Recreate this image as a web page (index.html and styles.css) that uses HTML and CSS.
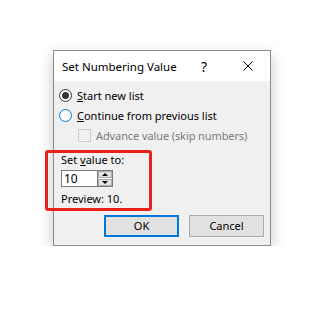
FILE: index.html
```html
<!DOCTYPE html>
<html lang="en">

<head>
    <meta charset="UTF-8">
    <title>Set Numbering Value</title>
    <link rel="stylesheet" href="styles.css">
</head>

<body>
    <div class="dialog">
        <div class="titlebar">
            <span class="title">Set Numbering Value</span>
            <span class="tb-btn help">?</span>
            <span class="tb-btn close">
                <svg width="10" height="10" viewBox="0 0 10 10">
                    <path d="M0.5 0.5 L9.5 9.5 M9.5 0.5 L0.5 9.5" stroke="#000" stroke-width="1" fill="none" />
                </svg>
            </span>
        </div>

        <div class="content">
            <div class="row">
                <span class="radio checked"></span>
                <span><u>S</u>tart new list</span>
            </div>
            <div class="row">
                <span class="radio focus"></span>
                <span><u>C</u>ontinue from previous list</span>
            </div>
            <div class="row sub disabled">
                <span class="checkbox"></span>
                <span>Advance value (skip numbers)</span>
            </div>

            <div class="group">
                <div class="label">Set <u>v</u>alue to:</div>
                <div class="spin">
                    <div class="spin-input">10</div>
                    <div class="spin-btns">
                        <span class="arrow up"></span>
                        <span class="arrow down"></span>
                    </div>
                </div>
                <div class="label">Preview: 10.</div>
            </div>

            <div class="buttons">
                <div class="btn default">OK</div>
                <div class="btn">Cancel</div>
            </div>
        </div>

        <div class="highlight"></div>
    </div>
</body>

</html>
```

FILE: styles.css
```css
body {
    margin: 0;
    padding: 50px 0 0 53px;
    background-color: #ffffff;
    font-family: "Noto Sans", sans-serif;
    font-size: 11px;
    color: #000000;
    white-space: nowrap;
}

.dialog {
    position: relative;
    width: 216px;
    border: 1px solid #8c8c8c;
    background-color: #f0f0f0;
    box-shadow: 0 5px 14px rgba(0, 0, 0, 0.22);
}

.titlebar {
    display: flex;
    align-items: center;
    height: 30px;
    background-color: #ffffff;
    font-size: 11.5px;
}

.title {
    flex: 1;
    padding-left: 8px;
}

.tb-btn {
    display: flex;
    align-items: center;
    justify-content: center;
    width: 44px;
    height: 30px;
}

.help {
    font-size: 14px;
}

.content {
    padding: 4px 6px 8px 5px;
}

.row {
    display: flex;
    align-items: center;
    height: 20px;
    gap: 5px;
}

.row.sub {
    padding-left: 19px;
    letter-spacing: -0.1px;
}

.disabled {
    color: #7a7a7a;
}

.radio {
    width: 11px;
    height: 11px;
    border: 1px solid #333333;
    border-radius: 50%;
    background-color: #ffffff;
    position: relative;
}

.radio.checked::after {
    content: "";
    position: absolute;
    left: 2px;
    top: 2px;
    width: 7px;
    height: 7px;
    border-radius: 50%;
    background-color: #333333;
}

.radio.focus {
    border-color: #0078d7;
}

.checkbox {
    width: 11px;
    height: 11px;
    border: 1px solid #cccccc;
    background-color: #f0f0f0;
}

.group {
    padding: 7px 0 0 2px;
}

.label {
    height: 16px;
    line-height: 16px;
}

.spin {
    display: flex;
    margin: 2px 0 4px;
    height: 17px;
}

.spin-input {
    width: 33px;
    height: 15px;
    line-height: 15px;
    border: 1px solid #7a7a7a;
    border-right: none;
    background-color: #ffffff;
    padding-left: 2px;
    font-size: 12px;
}

.spin-btns {
    display: flex;
    flex-direction: column;
    gap: 1px;
    width: 14px;
    border: 1px solid #7a7a7a;
    background-color: #ffffff;
}

.arrow {
    flex: 1;
    display: flex;
    align-items: center;
    justify-content: center;
    background-color: #e1e1e1;
    border: 1px solid #adadad;
}

.arrow::before {
    content: "";
    border-left: 3px solid transparent;
    border-right: 3px solid transparent;
}

.arrow.up::before {
    border-bottom: 3px solid #000000;
}

.arrow.down::before {
    border-top: 3px solid #000000;
}

.buttons {
    display: flex;
    justify-content: flex-end;
    gap: 10px;
    margin-top: 8px;
}

.btn {
    width: 73px;
    height: 20px;
    line-height: 20px;
    text-align: center;
    background-color: #e1e1e1;
    border: 1px solid #adadad;
}

.btn.default {
    border: 2px solid #0078d7;
    width: 71px;
    height: 18px;
    line-height: 18px;
}

.highlight {
    position: absolute;
    left: -9px;
    top: 99px;
    width: 101px;
    height: 55px;
    border: 3px solid #e8221b;
    border-radius: 3px;
}
```
